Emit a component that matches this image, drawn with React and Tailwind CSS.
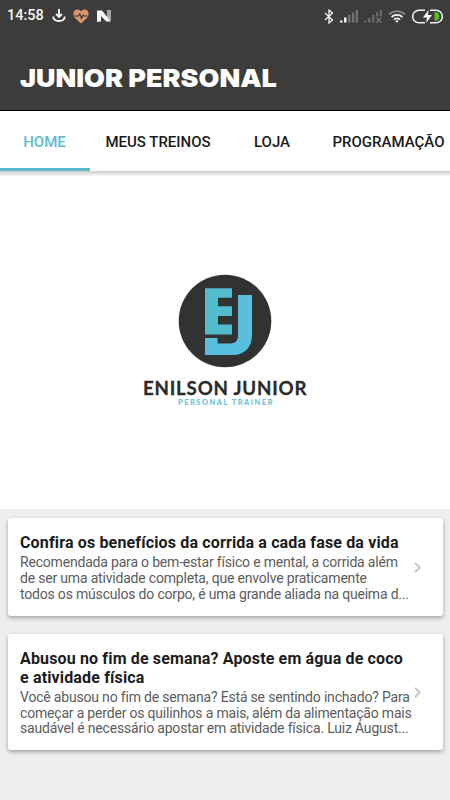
import React from "react";

const tabs = [
  { label: "HOME", active: true, className: "w-[90px]" },
  { label: "MEUS TREINOS", className: "w-[137px]" },
  { label: "LOJA", className: "w-[91px]" },
  { label: "PROGRAMAÇÃO", className: "w-[142px]" },
];

const posts = [
  {
    title: ["Confira os benefícios da corrida a cada fase da vida"],
    text: [
      "Recomendada para o bem-estar físico e mental, a corrida além",
      "de ser uma atividade completa, que envolve praticamente",
      "todos os músculos do corpo, é uma grande aliada na queima d...",
    ],
    className: "h-[98px]",
  },
  {
    title: ["Abusou no fim de semana? Aposte em água de coco", "e atividade física"],
    text: [
      "Você abusou no fim de semana? Está se sentindo inchado? Para",
      "começar a perder os quilinhos a mais, além da alimentação mais",
      "saudável é necessário apostar em atividade física. Luiz August...",
    ],
    className: "h-[116px]",
  },
];

const StatusBar = () => (
  <div className="h-8 flex items-center justify-between pl-[7px] pr-[7px] text-[#f5f5f5]">
    <div className="flex items-center">
      <span className="w-[37px] text-[14.500px] font-medium leading-4 whitespace-nowrap">14:58</span>
      {/* Download */}
      <svg className="ml-2 w-[14px] h-[14px]" viewBox="0 0 14 14" fill="none" stroke="#f2f2f2" strokeWidth="1.900">
        <path d="M7 0v7.500M4 5l3 3 3-3" />
        <path d="M1.200 7.500c.2 3 2.500 4.500 5.800 4.500s5.600-1.500 5.800-4.500" />
      </svg>
      {/* Heart rate */}
      <svg className="ml-[7px] w-4 h-[15px]" viewBox="0 0 16 15">
        <path d="M8 14.500C4 11 .4 8.300.4 4.700.4 2.200 2.200.6 4.400.6 6 .6 7.300 1.400 8 2.500 8.700 1.400 10 .6 11.600.6c2.200 0 4 1.600 4 4.100C15.600 8.300 12 11 8 14.500Z" fill="#d9966c" />
        <path d="M1.500 7h4l1.300-2 1.700 4.500L10 6l.8 1h3.700" fill="none" stroke="#3b3532" strokeWidth="1.100" />
      </svg>
      {/* N */}
      <svg className="ml-2 w-[14px] h-3" viewBox="0 0 14 12">
        <path d="M0 2.500 4 5v7H0Z" fill="#8d8d8d" />
        <path d="M10 0h4v10.500L10 8Z" fill="#a8a8a8" />
        <path d="M0 .5h5L14 11.500H9.200L4 6v5L0 12V.5Z" fill="#f5f5f5" />
      </svg>
    </div>
    <div className="flex items-center">
      {/* Bluetooth */}
      <svg className="w-[10px] h-[15px]" viewBox="0 0 10 15" fill="none" stroke="#f2f2f2" strokeWidth="1.300">
        <path d="M1 4l7.500 7L5 14V1l3.500 3L1 11" />
      </svg>
      <svg className="ml-[6px] w-[18px] h-[14px]" viewBox="0 0 18 14">
        <path d="M0 13.500v-2h2.500v2ZM4 13.500V8.500h2.500v5Z" fill="#f5f5f5" />
        <path d="M8 13.500V6h2.500v7.500ZM12 13.500V3.500h2.300v10ZM15.700 13.500V1H18v12.500Z" fill="#727272" />
      </svg>
      <svg className="ml-[6px] w-[18px] h-[14px]" viewBox="0 0 18 14">
        <path d="M0 13.500v-2h2.500v2ZM4 13.500V9h2.500v4.500ZM8 13.500V6h2.500v7.500ZM12 7.500v-4h2.300v4ZM15.700 7.500V1H18v6.500Z" fill="#686868" />
        <path d="M12.500 9l4.500 4.500M17 9l-4.500 4.500" stroke="#777" strokeWidth="1.300" />
      </svg>
      {/* Wifi */}
      <svg className="ml-[6px] w-[18px] h-[14px]" viewBox="0 0 18 14" fill="none">
        <path d="M1 5.300a12 12 0 0 1 16 0" stroke="#8f8f8f" strokeWidth="1.700" />
        <path d="M3.500 8a8.300 8.300 0 0 1 11 0M6 10.600a4.700 4.700 0 0 1 6 0" stroke="#f2f2f2" strokeWidth="1.800" />
        <path d="M7.300 12a2.500 2.500 0 0 1 3.400 0L9 13.800Z" fill="#f2f2f2" />
      </svg>
      {/* Battery */}
      <svg className="ml-[6px] w-[31px] h-[15px]" viewBox="0 0 31 15">
        <path d="M13 1.200H7a6.300 6.300 0 0 0 0 12.600h6M18 1.200h6a6.300 6.300 0 0 1 0 12.600h-6" fill="none" stroke="#f2f2f2" strokeWidth="1.500" />
        <path d="M23 3.500a4 4 0 0 1 0 8Z" fill="#58bd22" stroke="#58bd22" />
        <path d="M16.500 1 11 8.500h4L14 14l6-8h-4Z" fill="#fff" />
      </svg>
    </div>
  </div>
);

const Logo = () => (
  <svg className="w-[180px] h-[150px]" viewBox="0 0 180 150">
    <circle cx="90" cy="56" r="46.300" fill="#323232" />
    <path d="M70 23.300h27v9.400H83v8.600h14V51H83v8.600h14v9.900H70Z" fill="#51bccd" />
    <path d="M103 30h14v40c0 12-7 20-19 20H70V73h12.500v5.500H95c5.500 0 8-3 8-8Z" fill="#59bfdf" />
    <text x="8" y="129.700" textLength="163.500" fontSize="18.700" fontWeight="700" fill="#2b2b2b" stroke="#2b2b2b" strokeWidth="0.300" fontFamily="Lato, sans-serif">ENILSON JUNIOR</text>
    <text x="43" y="140.300" textLength="94.500" fontSize="7.500" fontWeight="900" fill="#69c3dd" fontFamily="Lato, sans-serif">PERSONAL TRAINER</text>
  </svg>
);

const PostCard = ({ post }) => (
  <div className={`${post.className} flex items-center rounded-[3px] bg-white pl-[12.500px] pr-[21.500px] shadow-[0_2px_4px_rgba(0,0,0,0.32)]`}>
    <div className="flex-1 min-w-0 pt-[2px] whitespace-nowrap">
      <h2 className="text-[16px] leading-[19px] tracking-[0.15px] font-bold text-[#1c1c1c]">
        {post.title.map((line) => (
          <span key={line} className="block">{line}</span>
        ))}
      </h2>
      <p className="mt-[3px] text-[14px] leading-[15.700px] tracking-[-0.190px] text-[#5c5c5c]">
        {post.text.map((line) => (
          <span key={line} className="block">{line}</span>
        ))}
      </p>
    </div>
    <svg className="w-[7px] h-[11px] shrink-0" viewBox="0 0 7 11" fill="none" stroke="#bdbdbd" strokeWidth="1.700">
      <path d="M1 .8l4.700 4.700L1 10.200" />
    </svg>
  </div>
);

const App = () => {
  return (
    <div className="w-[450px] h-[800px] overflow-hidden flex flex-col bg-[#eeeeee] font-['Roboto',sans-serif]">
      <header className="h-[111px] shrink-0 bg-[#3c3c3b] border-b border-black">
        <StatusBar />
        <h1 className="mt-[30.500px] ml-5 h-8 w-[228px] origin-left scale-x-[1.123] scale-y-[1.030] leading-8 text-[24px] font-black text-white whitespace-nowrap font-['Inter',sans-serif]">
          JUNIOR PERSONAL
        </h1>
      </header>

      {/* Tabs */}
      <nav className="h-[60px] shrink-0 flex bg-white overflow-hidden">
        {tabs.map((tab) => (
          <div
            key={tab.label}
            className={`${tab.className} shrink-0 flex items-center justify-center border-b-[3px] pt-[5px] pr-px text-[15px] font-medium whitespace-nowrap ${
              tab.active ? "text-[#5bbdd0] border-[#5ab8cc]" : "text-[#1a1a1a] border-transparent"
            }`}
          >
            {tab.label}
          </div>
        ))}
      </nav>

      <main className="h-[338px] shrink-0 bg-white">
        <div className="h-[6px] bg-gradient-to-b from-[#cccccc] to-white" />
        <div className="mt-[88px] flex justify-center">
          <Logo />
        </div>
      </main>

      <section className="flex flex-col gap-[18px] px-[7.500px] pt-[9px]">
        {posts.map((post) => (
          <PostCard key={post.title[0]} post={post} />
        ))}
      </section>
    </div>
  );
};

export default App;
